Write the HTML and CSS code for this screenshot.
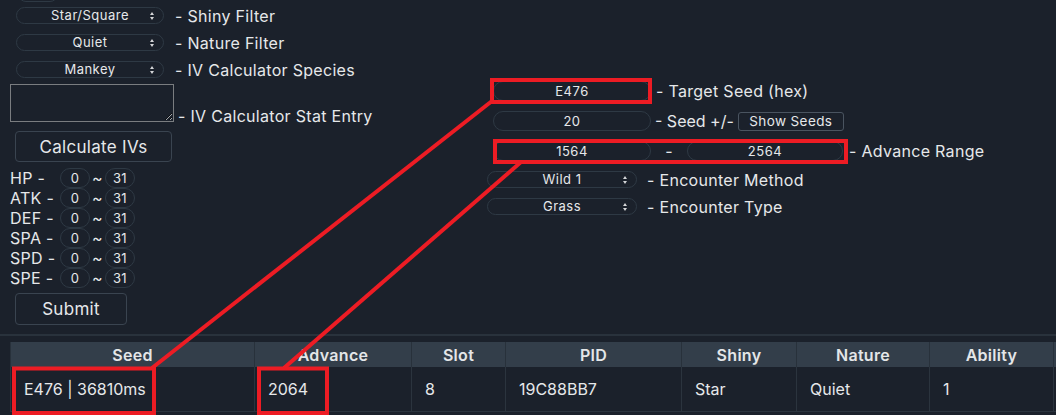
FILE: index.html
```html
<!DOCTYPE html>
<html>
<head>
<meta charset="utf-8">
<link rel="stylesheet" href="styles.css">
</head>
<body>
<div class="top">
  <div class="left">
    <div class="stub"></div>
    <div class="row">
      <div class="sel"><span>Star/Square</span><svg class="arr" viewBox="0 0 4 8" width="4" height="8"><path d="M2 0L4 3H0Z M2 8L4 5H0Z"/></svg></div>
      <span class="lbl">- Shiny Filter</span>
    </div>
    <div class="row">
      <div class="sel"><span>Quiet</span><svg class="arr" viewBox="0 0 4 8" width="4" height="8"><path d="M2 0L4 3H0Z M2 8L4 5H0Z"/></svg></div>
      <span class="lbl">- Nature Filter</span>
    </div>
    <div class="row">
      <div class="sel"><span>Mankey</span><svg class="arr" viewBox="0 0 4 8" width="4" height="8"><path d="M2 0L4 3H0Z M2 8L4 5H0Z"/></svg></div>
      <span class="lbl">- IV Calculator Species</span>
    </div>
    <div class="row ta-row">
      <textarea class="ta"></textarea>
      <span class="lbl ta-lbl">- IV Calculator Stat Entry</span>
    </div>
    <button class="btn calc">Calculate IVs</button>
    <div class="ivs">
      <div class="iv"><span class="ivl">HP -</span><span class="ivp">0</span><span class="tilde">~</span><span class="ivp">31</span></div>
      <div class="iv"><span class="ivl">ATK -</span><span class="ivp">0</span><span class="tilde">~</span><span class="ivp">31</span></div>
      <div class="iv"><span class="ivl">DEF -</span><span class="ivp">0</span><span class="tilde">~</span><span class="ivp">31</span></div>
      <div class="iv"><span class="ivl">SPA -</span><span class="ivp">0</span><span class="tilde">~</span><span class="ivp">31</span></div>
      <div class="iv"><span class="ivl">SPD -</span><span class="ivp">0</span><span class="tilde">~</span><span class="ivp">31</span></div>
      <div class="iv"><span class="ivl">SPE -</span><span class="ivp">0</span><span class="tilde">~</span><span class="ivp">31</span></div>
    </div>
    <button class="btn submit">Submit</button>
  </div>
  <div class="right">
    <div class="rrow">
      <div class="inp">E476</div>
      <span class="lbl l1">- Target Seed (hex)</span>
    </div>
    <div class="rrow">
      <div class="inp">20</div>
      <span class="lbl l2">- Seed +/-</span>
      <button class="btn show">Show Seeds</button>
    </div>
    <div class="rrow">
      <div class="inp">1564</div>
      <span class="dash">-</span>
      <div class="inp inp2">2564</div>
      <span class="lbl l3">- Advance Range</span>
    </div>
    <div class="rrow s">
      <div class="sel"><span>Wild 1</span><svg class="arr" viewBox="0 0 4 8" width="4" height="8"><path d="M2 0L4 3H0Z M2 8L4 5H0Z"/></svg></div>
      <span class="lbl l4">- Encounter Method</span>
    </div>
    <div class="rrow s">
      <div class="sel"><span>Grass</span><svg class="arr" viewBox="0 0 4 8" width="4" height="8"><path d="M2 0L4 3H0Z M2 8L4 5H0Z"/></svg></div>
      <span class="lbl l4">- Encounter Type</span>
    </div>
  </div>
</div>
<div class="results">
  <table>
    <colgroup>
      <col class="c1"><col class="c2"><col class="c3"><col class="c4"><col class="c5"><col class="c6"><col class="c7"><col class="c8">
    </colgroup>
    <thead>
      <tr><th>Seed</th><th>Advance</th><th>Slot</th><th>PID</th><th>Shiny</th><th>Nature</th><th>Ability</th><th></th></tr>
    </thead>
    <tbody>
      <tr><td>E476 | 36810ms</td><td>2064</td><td>8</td><td>19C88BB7</td><td>Star</td><td>Quiet</td><td>1</td><td></td></tr>
    </tbody>
  </table>
</div>
<svg class="marks" width="1056" height="415" viewBox="0 0 1056 415">
  <g fill="none" stroke="#ed1c24" stroke-width="4">
    <rect x="492" y="80" width="158" height="22"/>
    <rect x="495" y="141" width="351" height="21"/>
    <rect x="14" y="368.5" width="140" height="44.5"/>
    <rect x="259" y="368.5" width="68" height="44.5"/>
    <line x1="492" y1="101" x2="152" y2="368"/>
    <line x1="521" y1="162" x2="284" y2="368"/>
  </g>
</svg>
</body>
</html>
```

FILE: styles.css
```css
* { box-sizing: border-box; }
html, body { margin: 0; padding: 0; }
body {
  background: #1b212b;
  color: #e6e8ea;
  font-family: Inter, "Open Sans", sans-serif;
  font-size: 16px;
  letter-spacing: 0.3px;
  width: 1056px;
  height: 415px;
  overflow: hidden;
  position: relative;
}
.top { display: flex; height: 334px; }
.left {
  width: 487px;
  flex: none;
  padding-left: 10px;
  display: flex;
  flex-direction: column;
  align-items: flex-start;
}
.stub {
  width: 40px; height: 16px;
  margin: -14px 0 0 8px;
  border: 1px solid #2e3944;
  border-radius: 8px;
}
.row { display: flex; align-items: center; height: 27px; }
.sel {
  position: relative;
  width: 148px; height: 17px;
  border: 1px solid #2e3944;
  border-radius: 9px;
  font-size: 13px;
  letter-spacing: 0.5px;
  line-height: 15px;
  text-align: center;
}
.left .sel { margin-left: 6px; }
.arr { position: absolute; right: 9px; top: 4px; fill: #d4d6d8; }
.lbl { margin-left: 11px; line-height: 20px; white-space: nowrap; }
.ta-row { height: auto; align-items: flex-end; margin-top: 1px; }
.ta {
  display: block;
  width: 164px; height: 38px;
  margin: 0;
  background: transparent;
  border: 1px solid #7a7d80;
  border-radius: 0;
  color: #e6e8ea;
  resize: both;
}
.ta-lbl { margin-left: 4px; margin-bottom: -4px; }
.btn {
  background: transparent;
  border: 1px solid #3a4450;
  border-radius: 4px;
  color: #e6e8ea;
  font-family: inherit;
  letter-spacing: 0.3px;
  padding: 0;
}
.calc { margin: 9px 0 0 5px; width: 157px; height: 31px; font-size: 17px; }
.ivs { margin-top: 6px; display: flex; flex-direction: column; }
.iv { display: flex; align-items: center; height: 20px; }
.ivl { width: 50px; }
.ivp {
  width: 30px; height: 20px;
  border: 1px solid #2e3944;
  border-radius: 10px;
  font-size: 13px;
  line-height: 18px;
  text-align: center;
}
.tilde { width: 15px; text-align: center; }
.submit { margin: 5px 0 0 5px; width: 112px; height: 32px; font-size: 17px; }

.right { padding-top: 76px; display: flex; flex-direction: column; }
.rrow { display: flex; align-items: center; height: 30px; }
.rrow.s { height: 27px; }
.inp {
  width: 158px; height: 20px;
  margin-left: 6px;
  border: 1px solid #2e3944;
  border-radius: 10px;
  font-size: 13px;
  letter-spacing: 0.5px;
  line-height: 18px;
  text-align: center;
}
.inp2 { width: 156px; margin-left: 0; }
.dash { width: 36px; text-align: center; }
.l1 { margin-left: 5px; }
.l2 { margin-left: 4px; letter-spacing: 0; }
.l3 { margin-left: 6px; }
.l4 { margin-left: 10px; }
.right .sel { width: 150px; }
.show {
  margin-left: 4px;
  width: 106px; height: 19px;
  font-size: 13.5px;
  letter-spacing: 0.4px;
  border-color: #4a5460;
  border-radius: 3px;
}

.results { border-top: 2px solid #29323c; padding: 6px 0 0 10px; }
table { border-collapse: collapse; table-layout: fixed; width: 1143px; }
.c1 { width: 244px; } .c2 { width: 157px; } .c3 { width: 94px; } .c4 { width: 176px; }
.c5 { width: 115px; } .c6 { width: 133px; } .c7 { width: 124px; } .c8 { width: 100px; }
th {
  background: #333e4a;
  height: 25px;
  padding: 0;
  font-weight: 600;
  font-size: 16px;
  color: #e4e6e8;
  border: 1px solid #28313b;
  border-top: none; border-bottom: none;
  text-align: center;
}
td {
  height: 44px;
  padding: 0 13px;
  letter-spacing: 0;
  border: 1px solid #2b343e;
  border-top: none;
  white-space: nowrap;
}
.marks { position: absolute; left: 0; top: 0; pointer-events: none; }
```
